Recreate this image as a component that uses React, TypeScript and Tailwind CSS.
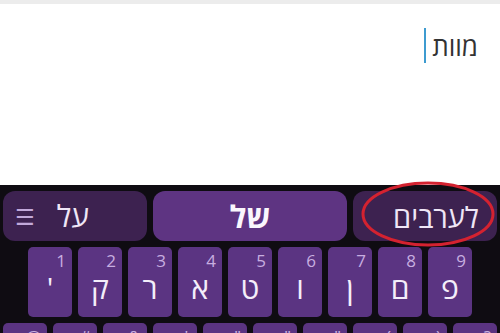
import React from "react"

const topRow = [
	{ hint: "1", letter: "'" },
	{ hint: "2", letter: "ק" },
	{ hint: "3", letter: "ר" },
	{ hint: "4", letter: "א" },
	{ hint: "5", letter: "ט" },
	{ hint: "6", letter: "ו" },
	{ hint: "7", letter: "ן" },
	{ hint: "8", letter: "ם" },
	{ hint: "9", letter: "פ" },
]

const secondRow = ["@", "#", "&", "*", "\"", "\"", "\"", "(", ")", "?"]

const Key = ({ hint, letter }: { hint: string; letter?: string }) => (
	<div className="relative w-[44px] h-[70px] rounded-[5px] bg-[#5b3482] shrink-0">
		<span className="absolute right-[6px] top-[5px] text-[17px] leading-none text-[#c7aee0]">{hint}</span>
		{letter && (
			<span className="absolute inset-x-0 top-[26px] text-center text-[30px] leading-none text-[#f4eefa]">{letter}</span>
		)}
	</div>
)

export default function App() {
	return (
		<div className="w-[500px] h-[333px] overflow-hidden bg-white flex flex-col" style={{ fontFamily: '"Open Sans", "DejaVu Sans", sans-serif' }}>
			<div className="h-[4px] bg-[#ececec]" />
			<div className="flex-1 relative">
				<div dir="rtl" className="flex items-center pr-[22px] pt-[24px]">
					<span className="text-[26px] leading-none text-[#333333]">מוות</span>
					<span className="w-[2px] h-[35px] bg-[#3d9bd0] mr-[6px]" />
				</div>
			</div>
			<div className="h-[148px] bg-[#0f0c12] relative flex flex-col">
				<div className="flex gap-[6px] px-[3px] pt-[6px]">
					<div className="w-[144px] h-[50px] rounded-[12px] bg-[#3d2250] flex items-center">
						<span className="ml-[12px] text-[22px] leading-none text-[#c2a9da]">☰</span>
						<span className="ml-[22px] text-[30px] leading-none text-[#efe6f6]">על</span>
					</div>
					<div className="w-[194px] h-[50px] rounded-[12px] bg-[#5e3482] flex items-center justify-center">
						<span className="text-[31px] font-bold leading-none text-[#faf6fd]">של</span>
					</div>
					<div className="w-[144px] h-[50px] rounded-[12px] bg-[#3d2250] flex items-center justify-center">
						<span className="text-[29px] leading-none text-[#efe6f6] ml-[22px]">לערבים</span>
					</div>
				</div>
				<div className="flex justify-center gap-[6px] pt-[6px]">
					{topRow.map((k) => (
						<Key key={k.hint} hint={k.hint} letter={k.letter} />
					))}
				</div>
				<div className="flex gap-[6px] px-[3px] pt-[6px]">
					{secondRow.map((h, i) => (
						<Key key={i} hint={h} />
					))}
				</div>
				<svg className="absolute left-[360px] top-[-5px]" width="136" height="68" viewBox="0 0 136 68">
					<ellipse cx="68" cy="34" rx="65" ry="31" fill="none" stroke="#d42230" strokeWidth="3" />
				</svg>
			</div>
		</div>
	)
}
